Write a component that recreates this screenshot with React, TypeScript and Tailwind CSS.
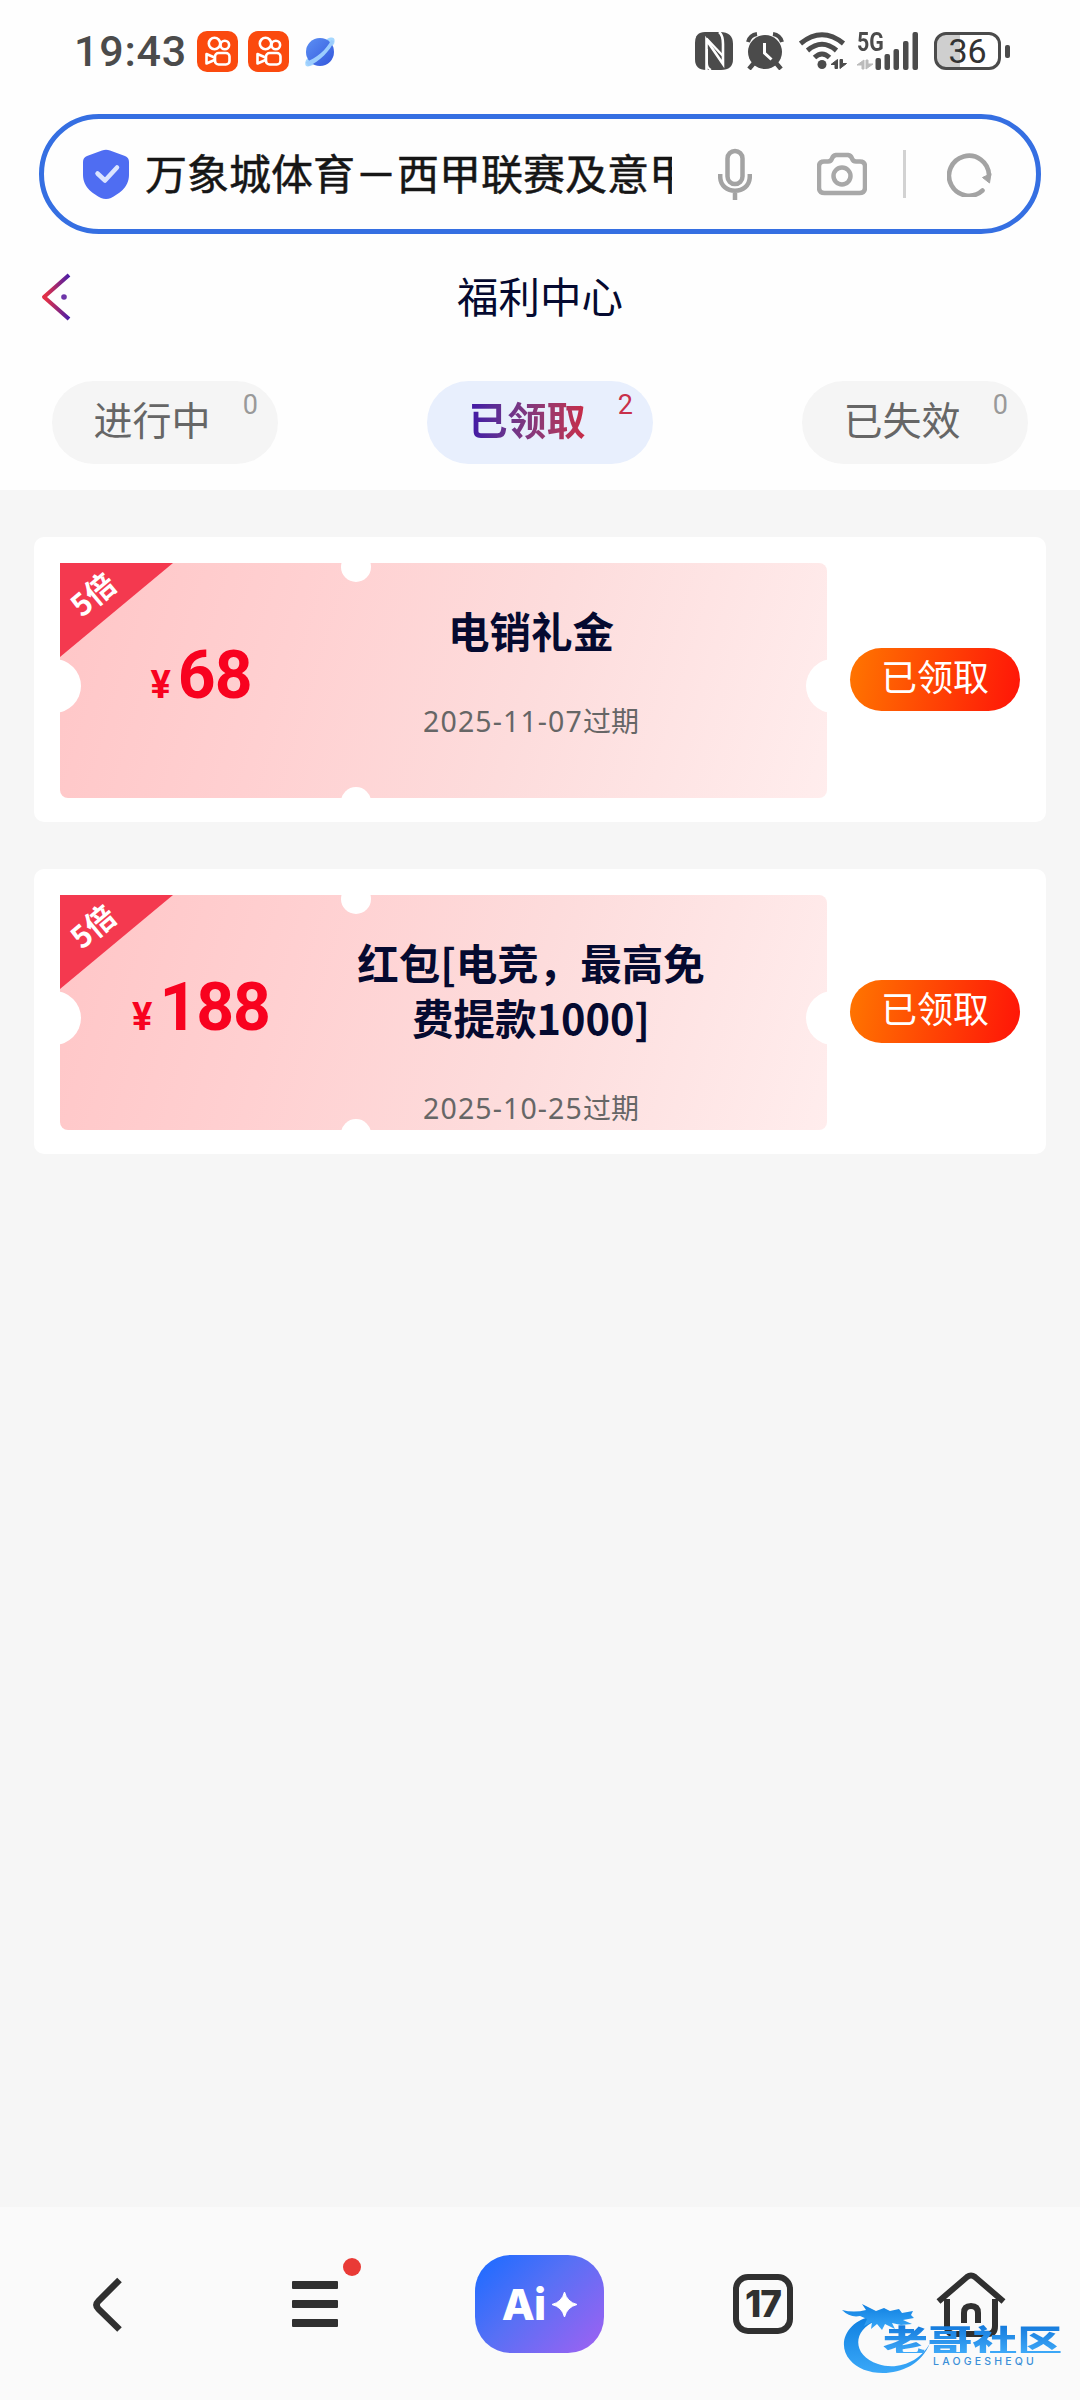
import clsx from 'clsx';

const tabs = [
	{ title: '进行中', count: 0 },
	{ title: '已领取', count: 2, active: true },
	{ title: '已失效', count: 0 },
];

const coupons = [
	{ amount: 68, rate: '5倍', title: '电销礼金', expires: '2025-11-07' },
	{ amount: 188, rate: '5倍', title: '红包[电竞，最高免费提款1000]', expires: '2025-10-25' },
];

function VideoAppIcon() {
	return (
		<svg width="41" height="41" viewBox="0 0 41 41" fill="none">
			<rect width="41" height="41" rx="10" fill="#fb4a0e" />
			<g stroke="#fff" strokeWidth="2.6">
				<circle cx="17.5" cy="12.5" r="5.7" />
				<circle cx="27.8" cy="14" r="4.3" />
				<rect x="18" y="22" width="14.5" height="11.5" rx="3.6" />
				<path d="M17.5 26.5 9.5 23v9.5l8-3.5" strokeLinejoin="round" />
			</g>
		</svg>
	);
}

function PlanetIcon() {
	return (
		<svg width="30" height="30" viewBox="0 0 30 30">
			<defs>
				<linearGradient id="planet" x1="0" y1="0" x2="1" y2="1">
					<stop offset="0" stopColor="#5c90f4" />
					<stop offset="1" stopColor="#3457dc" />
				</linearGradient>
			</defs>
			<path d="M22 2c6-3 9-1 7 5L8 28c-7 3-9 1-7-5z" fill="#a6d8ff" />
			<circle cx="15" cy="15" r="14" fill="url(#planet)" />
			<path d="M29 4C26 13 14 25 3.500 29L.5 25C11 22 22 12 26 3z" fill="#9ccdfd" />
		</svg>
	);
}

function NfcIcon() {
	return (
		<svg width="38" height="38" viewBox="0 0 38 38">
			<path d="M10 0h15q13 0 13 12v15q0 11-12 11H11Q0 38 0 27V11Q0 0 10 0z" fill="#4b4b4b" />
			<path d="M11.500 38V8L28 32V12Q28 3 24 0" fill="none" stroke="#fff" strokeWidth="2.600" />
			<path d="M11.500 6.500 28 24" stroke="#fff" strokeWidth="2.400" />
			<path d="M12 17v14q0 5 4 7" fill="none" stroke="#fff" strokeWidth="2" />
		</svg>
	);
}

function AlarmIcon() {
	return (
		<svg width="38" height="38" viewBox="0 0 38 38" fill="none">
			<circle cx="19" cy="20" r="17" fill="#4b4b4b" />
			<path d="M2 10Q4 3 11 2M36 10Q34 3 27 2" stroke="#4b4b4b" strokeWidth="4" />
			<path d="m8 31-5 6M30 31l5 6" stroke="#4b4b4b" strokeWidth="4.500" />
			<path d="M18.500 11v10l7 6.500" stroke="#fff" strokeWidth="3" />
		</svg>
	);
}

function WifiIcon() {
	return (
		<svg width="48" height="38" viewBox="0 0 48 38" fill="none">
			<g stroke="#4b4b4b" strokeWidth="5">
				<path d="M1.500 11.500Q23 -6 44.500 11.500" />
				<path d="M8.500 18.500Q23 6 37.500 18.500" />
				<path d="M15.500 25.500Q23 18.500 30.500 25.500" />
			</g>
			<circle cx="23" cy="32.500" r="4.500" fill="#4b4b4b" />
			<path d="M38.500 27.500v9h-2.500v-4h-4zM41 36.500v-9h2.500v4h4z" fill="#4b4b4b" stroke="#4b4b4b" />
		</svg>
	);
}

function SignalIcon() {
	return (
		<div className="relative h-[38px] w-[61px]">
			<span className="absolute left-0 -top-[2px] origin-left scale-x-[0.82] font-[Roboto] text-[26px]/[25px] font-bold text-[#4b4b4b]">5G</span>
			<svg width="61" height="38" viewBox="0 0 61 38">
				<path d="M7 28v9H5v-4H0zM9 37v-9h2v4h5z" fill="#bbb" stroke="#bbb" />
				<g fill="#4b4b4b">
					<rect x="18.500" y="26" width="5.500" height="12" rx="2" />
					<rect x="27.500" y="22" width="5.500" height="16" rx="2" />
					<rect x="36.500" y="17" width="5.500" height="21" rx="2" />
					<rect x="46" y="9" width="5.500" height="29" rx="2" />
					<rect x="55.500" y="0" width="5.500" height="38" rx="2" />
				</g>
			</svg>
		</div>
	);
}

function StatusBar() {
	return (
		<div className="flex h-[114px] justify-between pl-[74px] pr-[70px] pt-[31px]">
			<div className="flex h-[41px] items-center">
				<span className="w-[123px] font-[Roboto] text-[43px]/[41px] font-medium tracking-[0.800px] text-[#4b4b4b]">19:43</span>
				<VideoAppIcon />
				<div className="w-[10px]" />
				<VideoAppIcon />
				<div className="w-[16px]" />
				<PlanetIcon />
			</div>
			<div className="flex h-[40px] items-center">
				<NfcIcon />
				<div className="w-[13px]" />
				<AlarmIcon />
				<div className="w-[15px]" />
				<WifiIcon />
				<div className="w-[10px]" />
				<SignalIcon />
				<div className="ml-[16px] flex h-[38px] w-[67px] items-center justify-center rounded-[12px] border-[3.5px] border-[#4b4b4b] bg-linear-to-r from-[#cfcfcf] from-[38%] to-white to-[38%] font-[Roboto] text-[34px]/[34px] text-[#333]">
					36
				</div>
				<div className="ml-[4px] h-[13px] w-[5px] rounded-[2px] bg-[#4b4b4b]" />
			</div>
		</div>
	);
}

function SearchBar() {
	return (
		<div className="mx-[39px] flex h-[120px] items-center rounded-full border-[5px] border-[#356fe2] pl-[39px]">
			<svg width="46" height="50" viewBox="0 0 46 50" fill="none">
				<path d="M19 1.500Q23 0 27 1.500L42 7q4 1.500 4 6v13c0 13-11 19-18 23q-5 2-10 0C11 45 0 39 0 26V13q0-4.500 4-6z" fill="#4f6df2" />
				<path d="m14.500 24.500 7.500 7 12-13" stroke="#dbe4ff" strokeWidth="4.500" strokeLinecap="round" strokeLinejoin="round" />
			</svg>
			<div className="ml-[16px] w-[527px] overflow-hidden whitespace-nowrap pb-[4px] text-[42px]/[60px] text-[#161616] [-webkit-text-stroke:0.5px_#161616]">
				万象城体育－西甲联赛及意甲
			</div>
			<svg className="ml-[46px]" width="34" height="52" viewBox="0 0 34 52" fill="none" stroke="#a3a3a3" strokeWidth="4.500">
				<rect x="9.500" y="3" width="15" height="33" rx="7.500" />
				<path d="M2.200 26v2.500c0 19 29.600 19 29.600 0V26M17 43v9" />
			</svg>
			<svg className="ml-[65px]" width="50" height="44" viewBox="0 0 50 44" fill="none" stroke="#a8a8a8" strokeWidth="4.500">
				<path d="M7 9.500h4q3 0 4-3t4-3.500h12q3 .5 4 3.500t4 3h4q5 0 5 5v21q0 5.500-5.500 5.500h-35q-5.500 0-5.500-5.500v-21q0-5 5-5z" />
				<circle cx="25" cy="24" r="8.500" />
			</svg>
			<div className="ml-[36px] h-[48px] w-[3px] bg-[#d2d2d2]" />
			<svg className="ml-[41px]" width="45" height="45" viewBox="0 0 45 45" fill="none">
				<path d="M35.500 38.500A20 20 0 1 1 42 23" stroke="#a3a3a3" strokeWidth="4.600" strokeLinecap="round" />
				<path d="M35.500 25.500 44 21.500 42.500 31z" fill="#a3a3a3" stroke="#a3a3a3" />
			</svg>
		</div>
	);
}

function PageHeader() {
	return (
		<div className="flex h-[126px] items-center px-[41px]">
			<svg width="30" height="48" viewBox="0 0 30 48" fill="none">
				<defs>
					<linearGradient id="back" x1="0" y1="0" x2="1" y2="0">
						<stop offset="0.100" stopColor="#e03048" />
						<stop offset="1" stopColor="#4a1da8" />
					</linearGradient>
				</defs>
				<path d="M28 2 3 24l25 22" stroke="url(#back)" strokeWidth="4" strokeLinejoin="round" />
				<circle cx="23" cy="24" r="2.800" fill="#6d35a8" />
			</svg>
			<h1 className="flex-1 pb-[4px] pr-[30px] text-center text-[41.500px]/[60px] text-[#050a30]">福利中心</h1>
		</div>
	);
}

function TabList() {
	return (
		<div className="flex h-[130px] justify-between px-[52px] pt-[21px]">
			{tabs.map((tab) => (
				<button
					key={tab.title}
					className={clsx(
						'relative h-[83px] w-[226px] rounded-full pb-[8px] pr-[26px] text-[39px]/[75px]',
						tab.active ? 'bg-[#e8effd] font-bold' : 'bg-[#f5f5f5] text-[#666]'
					)}
				>
					<span className={clsx(tab.active && 'bg-linear-to-r from-[#4012a8] to-[#c92a45] bg-clip-text text-transparent')}>
						{tab.title}
					</span>
					<span
						className={clsx(
							'absolute right-[20px] top-[9px] font-[Roboto] text-[27px]/[30px] font-normal',
							tab.active ? 'text-[#c8304a]' : 'text-[#999]'
						)}
					>
						{tab.count}
					</span>
				</button>
			))}
		</div>
	);
}

function CouponCard({ coupon }: { coupon: (typeof coupons)[number] }) {
	return (
		<div className="flex h-[285px] rounded-[10px] bg-white pl-[26px] pt-[26px]">
			<div className="relative flex h-[235px] w-[767px] overflow-hidden rounded-[8px] rounded-tl-none bg-[linear-gradient(107deg,#ffc6c7_0%,#ffd0d1_30%,#fddcdc_60%,#ffeded_100%)]">
				{/* corner ribbon */}
				<div className="absolute left-0 top-0 h-[94px] w-[113px] bg-[#f4394f] [clip-path:polygon(0_0,100%_0,0_100%)]" />
				<span className="absolute left-[8px] top-[15px] w-[48px] -rotate-40 whitespace-nowrap text-center text-[30px]/[30px] font-bold text-white">
					{coupon.rate}
				</span>
				{/* punched edges */}
				<div className="absolute -left-[33px] top-[96px] size-[54px] rounded-full bg-white" />
				<div className="absolute -right-[33px] top-[96px] size-[54px] rounded-full bg-white" />
				<div className="absolute left-[281px] -top-[11px] size-[30px] rounded-full bg-white" />
				<div className="absolute left-[281px] -bottom-[19px] size-[30px] rounded-full bg-white" />

				<div className="flex w-[282px] items-baseline justify-center pt-[75px] font-[Roboto] font-bold text-[#f8021f]">
					<span className="text-[38px]/[76px]">¥</span>
					<span className="ml-[7px] text-[66px]/[76px] tracking-[-1px]">{coupon.amount}</span>
				</div>
				<div className="ml-[9px] w-[360px] pt-[40px] text-center">
					<h2 className="text-[41.500px]/[55px] font-bold text-[#050a30]">{coupon.title}</h2>
					<p className="pt-[40px] text-[28px]/[44px] text-[#666]">
						<span className="font-['Noto_Sans'] text-[28.500px] tracking-[1.100px]">{coupon.expires}</span>过期
					</p>
				</div>
			</div>
			<button className="ml-[23px] mt-[85px] h-[63px] w-[170px] rounded-full bg-[linear-gradient(100deg,#ff7600,#ff1408)] pb-[8px] text-[36px]/[55px] text-white">
				已领取
			</button>
		</div>
	);
}

function Watermark() {
	return (
		<div className="absolute left-[842px] top-[93px] h-[85px] w-[225px]">
			<svg className="absolute left-0 top-0" width="95" height="82" viewBox="0 0 95 82">
				<defs>
					<linearGradient id="dragon" x1="0" y1="0" x2="0" y2="1">
						<stop offset="0" stopColor="#0f7fe0" />
						<stop offset="1" stopColor="#3aa8f8" />
					</linearGradient>
				</defs>
				<path d="M32 16C5 20-6 44 8 60c16 20 66 19 80-17-9 18-32 28-52 21C10 56 10 30 34 21z" fill="url(#dragon)" />
				<path d="M0 10q12 3 24 0l-4-6 14 7 8-3 6 3 9-2 3 4 11-2-2 4 3 3-11 2 9 4-11 1-9-2 3 6-10-5-3 6-5-6-6 5 1-7-8 4 3-7-7-3Q8 18 0 10z" fill="url(#dragon)" />
			</svg>
			<span className="absolute left-[41px] top-[25px] origin-left scale-x-[1.400] whitespace-nowrap bg-linear-to-b from-[#1279dc] to-[#3ea9f8] bg-clip-text text-[32px]/[28px] font-black text-transparent">
				老哥社区
			</span>
			<span className="absolute left-[91px] top-[56px] font-[Inter] text-[10.500px]/[11px] font-medium tracking-[3.200px] text-[#3a8fd8]">LAOGESHEQU</span>
		</div>
	);
}

function BottomNav() {
	return (
		<nav className="relative flex h-[193px] bg-[#fafafa] pl-[92px] pt-[48px]">
			<svg className="mt-[22px]" width="32" height="56" viewBox="0 0 32 56" fill="none">
				<path d="M27.500 3 6.500 24q-4 4 0 8l21 20.500" stroke="#303030" strokeWidth="6.500" />
			</svg>
			<div className="relative ml-[168px] mt-[26px] flex h-[46px] w-[46px] flex-col justify-between">
				<div className="h-[8px] rounded-[1px] bg-[#303030]" />
				<div className="h-[8px] rounded-[1px] bg-[#303030]" />
				<div className="h-[8px] rounded-[1px] bg-[#303030]" />
				<div className="absolute -right-[23px] -top-[23px] size-[18px] rounded-full bg-[#e93a36]" />
			</div>
			<div className="ml-[137px] flex h-[98px] w-[129px] items-center justify-center rounded-[36px] bg-[linear-gradient(135deg,#236cff_8%,#5870f5_45%,#9a62f2_95%)]">
				<span className="font-[Inter] text-[43px]/[50px] font-extrabold tracking-[-1px] text-white">Ai</span>
				<svg className="ml-[7px]" width="25" height="25" viewBox="0 0 25 25">
					<path d="M12.500 0q2.500 10 12.500 12.500-10 2.500-12.500 12.500Q10 15 0 12.500 10 10 12.500 0z" fill="#fff" stroke="#fff" strokeLinejoin="round" />
				</svg>
			</div>
			<div className="ml-[129px] mt-[19px] flex h-[60px] w-[60px] items-center justify-center rounded-[15px] border-[6px] border-[#303030] font-[Inter] text-[37px]/[48px] font-extrabold tracking-[-1px] text-[#303030]">
				17
			</div>
			<svg className="ml-[143px] mt-[17px]" width="70" height="66" viewBox="0 0 70 66" fill="none" stroke="#303030" strokeWidth="6">
				<path d="M2.500 29.500 31 5q4-3 8 0l28.500 24.500" />
				<path d="M11 27v27q0 8 7 8h34q7 0 7-8V27" />
				<path d="M28 51V41q0-7 7-7t7 7v10" />
			</svg>
			<Watermark />
		</nav>
	);
}

export default function App() {
	return (
		<div className="flex h-[2400px] w-[1080px] flex-col overflow-hidden bg-[#f6f6f6] font-['Noto_Sans_CJK_SC',sans-serif]">
			<header className="bg-[#fefefe]">
				<StatusBar />
				<SearchBar />
				<PageHeader />
				<TabList />
			</header>
			<main className="flex flex-1 flex-col gap-[47px] px-[34px] pt-[47px]">
				{coupons.map((coupon) => (
					<CouponCard key={coupon.title} coupon={coupon} />
				))}
			</main>
			<BottomNav />
		</div>
	);
}
